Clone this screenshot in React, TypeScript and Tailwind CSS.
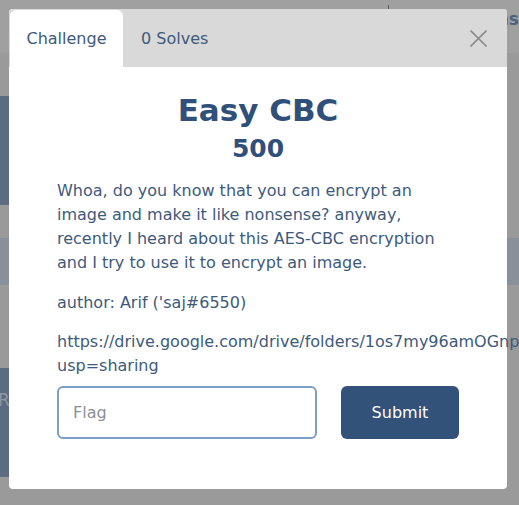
import React from 'react';

const font = { fontFamily: '"DejaVu Sans", "Liberation Sans", sans-serif' };

const ChallengeModal = () => {
  return (
    <div className="absolute left-[9px] top-[9px] flex h-[480px] w-[498px] flex-col rounded-[4px] bg-white">
      {/* tabs */}
      <div className="flex h-[58px] items-stretch rounded-t-[4px] bg-[#d9d9d9] pl-px pt-px">
        <div className="flex w-[113px] items-center justify-center rounded-tl-[6px] rounded-tr-[6px] bg-white text-[16px] text-[#3d5a7c]">
          Challenge
        </div>
        <div className="flex items-center pl-[18px] text-[16px] text-[#3d5a7c]">0 Solves</div>
        <button type="button" className="ml-auto mr-[20px] flex items-center">
          <svg width="17" height="17" viewBox="0 0 17 17" fill="none" stroke="#8c8c8c" strokeWidth="1.6">
            <path d="M0.5 0.5 L16.5 16.5 M16.5 0.5 L0.5 16.5" />
          </svg>
        </button>
      </div>

      {/* body */}
      <div className="flex flex-col px-[48px] pt-[25px] text-[#3d5a7c]">
        <h2 className="text-center text-[31px] font-extrabold leading-[36px] text-[#30507a]">Easy CBC</h2>
        <h3 className="mt-[5px] text-center text-[25px] font-bold leading-[32px] text-[#30507a]">500</h3>
        <div className="mt-[14px] text-[16px] leading-[24px]">
          <p>
            Whoa, do you know that you can encrypt an
            <br />
            image and make it like nonsense? anyway,
            <br />
            recently I heard about this AES-CBC encryption
            <br />
            and I try to use it to encrypt an image.
          </p>
          <p className="mt-[16px]">author: Arif ('saj#6550)</p>
          <p className="mt-[15px] whitespace-nowrap">
            https://drive.google.com/drive/folders/1os7my96amOGnp2jXk4Q?
            <br />
            usp=sharing
          </p>
        </div>
        <form className="mt-[8px] flex gap-[24px]" onSubmit={(e) => e.preventDefault()}>
          <input
            type="text"
            placeholder="Flag"
            className="h-[53px] w-[260px] rounded-[6px] border-2 border-[#7b9dc7] px-[14px] text-[16px] text-[#3d5a7c] outline-none placeholder:text-[#8a8f96]"
            style={font}
          />
          <button
            type="submit"
            className="h-[53px] w-[118px] rounded-[6px] bg-[#32527a] text-[16px] font-medium text-white"
            style={font}
          >
            Submit
          </button>
        </form>
      </div>
    </div>
  );
};

export default function App() {
  return (
    <div className="relative h-[505px] w-[519px] overflow-hidden bg-[#9a9a9a]" style={font}>
      {/* page behind the backdrop */}
      <div className="flex flex-col">
        <div className="flex h-[53px] items-start justify-end bg-[#a0a0a0]">
          <div className="mr-[108px] mt-[5px] h-[5px] w-px bg-[#555]" />
          <span className="mt-[7px] text-[17px] font-bold text-[#4d6280]">ns</span>
        </div>
        <div className="h-[43px]" />
        <div className="h-[109px] w-[200px] bg-[#5b6b80]" />
        <div className="h-[33px]" />
        <div className="h-[47px] bg-[#8a9099]" />
        <div className="h-[83px]" />
        <div className="flex h-[109px] w-[200px] items-start bg-[#5b6b80] pt-[20px]">
          <span className="-ml-[2px] text-[17px] text-[#8d96a3]">R</span>
        </div>
      </div>

      <ChallengeModal />
    </div>
  );
}
